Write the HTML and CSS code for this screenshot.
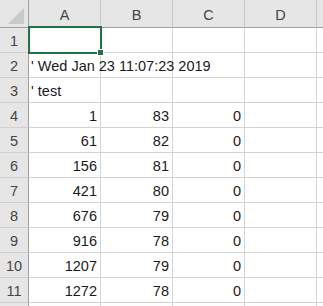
FILE: index.html
```html
<!DOCTYPE html>
<html>
<head>
<meta charset="utf-8">
<link rel="stylesheet" href="styles.css">
</head>
<body>
<div class="sheet">
  <div class="corner"><span class="tri"></span></div>
  <div class="ch">A</div><div class="ch">B</div><div class="ch">C</div><div class="ch">D</div><div class="ch"></div>

  <div class="rh">1</div><div class="c"></div><div class="c"></div><div class="c"></div><div class="c"></div><div class="c"></div>
  <div class="rh">2</div><div class="c t">' Wed Jan 23 11:07:23 2019</div><div class="c"></div><div class="c"></div><div class="c"></div><div class="c"></div>
  <div class="rh">3</div><div class="c t">' test</div><div class="c"></div><div class="c"></div><div class="c"></div><div class="c"></div>
  <div class="rh">4</div><div class="c n">1</div><div class="c n">83</div><div class="c n">0</div><div class="c"></div><div class="c"></div>
  <div class="rh">5</div><div class="c n">61</div><div class="c n">82</div><div class="c n">0</div><div class="c"></div><div class="c"></div>
  <div class="rh">6</div><div class="c n">156</div><div class="c n">81</div><div class="c n">0</div><div class="c"></div><div class="c"></div>
  <div class="rh">7</div><div class="c n">421</div><div class="c n">80</div><div class="c n">0</div><div class="c"></div><div class="c"></div>
  <div class="rh">8</div><div class="c n">676</div><div class="c n">79</div><div class="c n">0</div><div class="c"></div><div class="c"></div>
  <div class="rh">9</div><div class="c n">916</div><div class="c n">78</div><div class="c n">0</div><div class="c"></div><div class="c"></div>
  <div class="rh">10</div><div class="c n">1207</div><div class="c n">79</div><div class="c n">0</div><div class="c"></div><div class="c"></div>
  <div class="rh">11</div><div class="c n">1272</div><div class="c n">78</div><div class="c n">0</div><div class="c"></div><div class="c"></div>
  <div class="rh"></div><div class="c"></div><div class="c"></div><div class="c"></div><div class="c"></div><div class="c"></div>

  <div class="sel"><span class="handle"></span></div>
</div>
</body>
</html>
```

FILE: styles.css
```css
html, body {
  margin: 0;
  padding: 0;
  background: #ffffff;
  overflow: hidden;
}
.sheet {
  position: relative;
  display: grid;
  grid-template-columns: 29px repeat(5, 72px);
  grid-template-rows: 28px repeat(12, 25px);
  font-family: "Liberation Sans", Arial, sans-serif;
  font-size: 14.5px;
  color: #1a1a1a;
  width: 323px;
  height: 306px;
  overflow: hidden;
}
.corner, .ch, .rh, .c {
  box-sizing: border-box;
  border-right: 1px solid #d4d4d4;
  border-bottom: 1px solid #d4d4d4;
  display: flex;
  align-items: center;
  white-space: nowrap;
}
.corner {
  position: relative;
  background: #e6e6e6;
  border-right-color: #9f9f9f;
  border-bottom-color: #9f9f9f;
}
.tri {
  position: absolute;
  right: 4px;
  bottom: 3px;
  width: 0;
  height: 0;
  border-left: 16px solid transparent;
  border-bottom: 16px solid #c9c9c9;
}
.ch {
  background: #e6e6e6;
  justify-content: center;
  color: #444444;
  border-right-color: #c6c6c6;
  border-bottom-color: #9f9f9f;
  padding-top: 2px;
}
.rh {
  background: #e6e6e6;
  justify-content: center;
  color: #444444;
  border-right-color: #9f9f9f;
  border-bottom-color: #d0d0d0;
  padding-top: 1px;
}
.c {
  background: #ffffff;
  padding: 1px 3px 0 2px;
}
.t {
  overflow: visible;
  position: relative;
  z-index: 1;
}
.n {
  justify-content: flex-end;
}
.sel {
  position: absolute;
  left: 28px;
  top: 26px;
  width: 74px;
  height: 28px;
  box-sizing: border-box;
  border: 2px solid #217346;
  z-index: 2;
}
.handle {
  position: absolute;
  right: -4px;
  bottom: -4px;
  width: 5px;
  height: 5px;
  background: #217346;
  border: 1px solid #ffffff;
}
```
